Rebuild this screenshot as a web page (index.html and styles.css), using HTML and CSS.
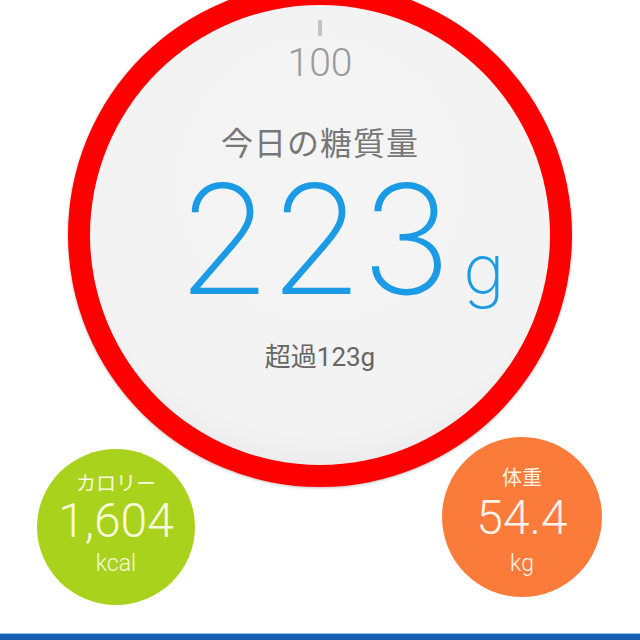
FILE: index.html
```html
<!DOCTYPE html>
<html lang="ja">
<head>
    <meta charset="UTF-8">
    <meta name="viewport" content="width=device-width, initial-scale=1.0">
    <title>今日の糖質量</title>
    <link rel="stylesheet" href="styles.css">
</head>
<body>
    <!-- 糖質メーター -->
    <div class="dial">
        <div class="face">
            <div class="tick"></div>
            <div class="limit">100</div>
            <div class="label">今日の糖質量</div>
            <div class="amount">
                <span class="amount-value">223</span>
                <span class="amount-unit">g</span>
            </div>
            <div class="over">超過123g</div>
        </div>
    </div>

    <!-- カロリー・体重 -->
    <div class="stats">
        <div class="ball calorie">
            <div class="ball-title">カロリー</div>
            <div class="ball-value">1,604</div>
            <div class="ball-unit">kcal</div>
        </div>
        <div class="ball weight">
            <div class="ball-title">体重</div>
            <div class="ball-value">54.4</div>
            <div class="ball-unit">kg</div>
        </div>
    </div>

    <div class="tabbar"></div>
</body>
</html>
```

FILE: styles.css
```css
body {
    margin: 0;
    width: 640px;
    height: 640px;
    overflow: hidden;
    background-color: #fff;
    font-family: Roboto, "Noto Sans CJK JP", sans-serif;
    display: flex;
    flex-direction: column;
}
.dial {
    width: 504px;
    height: 504px;
    margin: -17px auto 0;
    padding: 22px;
    box-sizing: border-box;
    border-radius: 50%;
    background-color: #ff0000;
    box-shadow: 0 1px 3px rgba(0, 0, 0, 0.25);
    flex-shrink: 0;
}
.face {
    width: 100%;
    height: 100%;
    border-radius: 50%;
    background: radial-gradient(circle at 50% 38%, #f5f5f5 0, #f2f2f2 70%, #dcdcdc 100%);
    display: flex;
    flex-direction: column;
    align-items: center;
}
.tick {
    width: 4px;
    height: 16px;
    margin-top: 15px;
    background-color: #c2c2c2;
}
.limit {
    margin-top: 8px;
    font-size: 39px;
    line-height: 38px;
    font-weight: 300;
    color: #9a9a9a;
}
.label {
    margin-top: 43px;
    font-family: "Noto Sans CJK JP", sans-serif;
    font-size: 32px;
    line-height: 32px;
    color: #777;
    letter-spacing: 1px;
}
.amount {
    display: flex;
    align-items: baseline;
    margin-top: 5px;
    margin-left: 42px;
    color: #1b9be6;
    font-family: Inter, Roboto, sans-serif;
    font-weight: 200;
}
.amount-value {
    font-size: 152px;
    line-height: 155px;
    letter-spacing: -2px;
}
.amount-unit {
    font-size: 70px;
    margin-left: 14px;
}
.over {
    margin-top: 27px;
    font-size: 26px;
    line-height: 26px;
    color: #666;
}
.stats {
    display: flex;
    justify-content: space-between;
    align-items: flex-start;
    margin-top: -50px;
    padding: 0 38px 0 37px;
}
.ball {
    border-radius: 50%;
    display: flex;
    flex-direction: column;
    align-items: center;
    box-sizing: border-box;
}
.calorie {
    width: 158px;
    height: 156px;
    margin-top: 12px;
    padding-top: 22px;
    background-color: #a9d21d;
    color: #f8fadc;
}
.weight {
    width: 160px;
    height: 160px;
    padding-top: 28px;
    background-color: #fb7b3b;
    color: #fff2e6;
}
.ball-title {
    font-family: "Noto Sans CJK JP", sans-serif;
    font-size: 20px;
    line-height: 24px;
}
.ball-value {
    font-size: 48px;
    line-height: 48px;
    font-weight: 300;
}
.calorie .ball-value {
    margin-top: 2px;
}
.weight .ball-value {
    margin-top: 5px;
}
.ball-unit {
    margin-top: 5px;
    font-size: 23px;
    line-height: 28px;
    font-weight: 300;
}
.weight .ball-unit {
    margin-top: 8px;
}
.tabbar {
    margin-top: auto;
    height: 6px;
    background-color: #1b5fb5;
    border-top: 1px solid #8cc8f0;
}
```
